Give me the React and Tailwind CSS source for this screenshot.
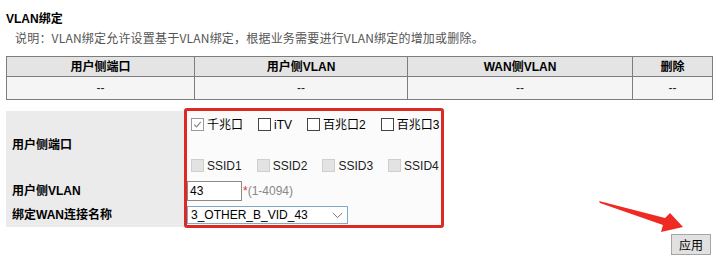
import React from 'react';

const FONT = { fontFamily: '"Liberation Sans", Arial, "Noto Sans CJK SC", sans-serif' };

const PORTS = [
  { label: '千兆口', checked: true },
  { label: 'iTV' },
  { label: '百兆口2' },
  { label: '百兆口3' },
];

const SSIDS = ['SSID1', 'SSID2', 'SSID3', 'SSID4'];

function Box({ checked, disabled }) {
  if (disabled) {
    return <span className="block w-[13px] h-[13px] border border-[#cfcfcf] bg-[#e3e3e3] shrink-0" />;
  }
  return (
    <span className={`flex items-center justify-center w-[13px] h-[13px] border bg-white shrink-0 ${checked ? 'border-[#9a9a9a]' : 'border-[#444]'}`}>
      {checked && (
        <svg width="9" height="9" viewBox="0 0 9 9" fill="none">
          <path d="M1.2 4.6 L3.5 6.9 L7.8 1.8" stroke="#8a8a8a" strokeWidth="1.2" />
        </svg>
      )}
    </span>
  );
}

export default function App() {
  return (
    <div className="relative w-[726px] h-[266px] bg-white overflow-hidden text-[12px] text-[#111]" style={FONT}>
      <div className="pl-[6px] pr-[14px] pt-[11px]">
        {/* Title */}
        <div className="h-[16px] leading-[16px] font-bold text-black">VLAN绑定</div>
        <div className="mt-[3px] h-[16px] leading-[16px] pl-[9px] text-[#555] text-[12px] tracking-[0.2px]" style={{ fontFamily: '"Noto Sans CJK SC", sans-serif' }}>
          说明：VLAN绑定允许设置基于VLAN绑定，根据业务需要进行VLAN绑定的增加或删除。
        </div>

        {/* Binding list */}
        <table className="mt-[10px] w-[706px] border-collapse table-fixed">
          <colgroup>
            <col className="w-[188px]" />
            <col className="w-[213px]" />
            <col className="w-[225px]" />
            <col className="w-[80px]" />
          </colgroup>
          <thead>
            <tr className="h-[20px] bg-[#e4e4e4]">
              {['用户侧端口', '用户侧VLAN', 'WAN侧VLAN', '删除'].map(h => (
                <th key={h} className="border border-[#7d7d7d] font-bold text-center p-0 text-black">{h}</th>
              ))}
            </tr>
          </thead>
          <tbody>
            <tr className="h-[23px] bg-[#f5f5f5]">
              {[0, 1, 2, 3].map(i => (
                <td key={i} className="border border-[#7d7d7d] text-center p-0 text-[#222]">--</td>
              ))}
            </tr>
          </tbody>
        </table>

        {/* Form */}
        <div className="relative mt-[11px] flex">
          <div className="w-[178px] bg-[#ebebeb] flex flex-col font-bold text-black">
            <div className="h-[67px] flex items-center pl-[6px]">用户侧端口</div>
            <div className="h-[25px] flex items-center pl-[6px]">用户侧VLAN</div>
            <div className="h-[24px] flex items-center pl-[6px]">绑定WAN连接名称</div>
          </div>
          <div className="flex flex-col bg-[#fbfbfb] w-[260px]">
            <div className="h-[67px] pl-[7px] pt-[6px] flex flex-col">
              <div className="h-[15px] flex items-center gap-[15px]">
                {PORTS.map(p => (
                  <label key={p.label} className="flex items-center gap-[3px] text-black">
                    <Box checked={p.checked} />
                    <span>{p.label}</span>
                  </label>
                ))}
              </div>
              <div className="mt-[26px] h-[15px] flex items-center gap-[15px]">
                {SSIDS.map(s => (
                  <label key={s} className="flex items-center gap-[3px] text-[#222]">
                    <Box disabled />
                    <span>{s}</span>
                  </label>
                ))}
              </div>
            </div>
            <div className="h-[25px] pl-[3px] flex items-center">
              <div className="w-[55px] h-[20px] border border-[#8a8a8a] bg-white pl-[2px] leading-[18px] text-black">43</div>
              <span className="ml-[1px] text-[#e23030]">*</span>
              <span className="text-[#888]">(1-4094)</span>
            </div>
            <div className="h-[24px] pl-[3px] flex items-center">
              <div className="w-[161px] h-[18px] border border-[#7eaac8] bg-white flex items-center justify-between pl-[3px] pr-[4px] text-black">
                <span>3_OTHER_B_VID_43</span>
                <svg width="11" height="7" viewBox="0 0 11 7" fill="none">
                  <path d="M0.8 1 L5.5 5.6 L10.2 1" stroke="#777" strokeWidth="1" />
                </svg>
              </div>
            </div>
          </div>

          {/* annotation box */}
          <div className="absolute left-[178px] top-[-3px] w-[260px] h-[120px] border-[3px] border-[#dc2a22] rounded-[3px]" />
        </div>

        <div className="flex justify-end mt-[7px] pr-[1px]">
          <button className="w-[40px] h-[21px] bg-[#e1e1e1] border border-[#a5a5a5] text-[12px] text-black leading-none" style={{ fontFamily: '"Noto Sans CJK SC", sans-serif' }}>
            应用
          </button>
        </div>
      </div>

      {/* annotation arrow */}
      <svg className="absolute left-0 top-0 pointer-events-none" width="726" height="266">
        <polygon points="599,201 665,218 670,213 683,227 661,232 663,225 600,203" fill="#ee2a22" />
      </svg>
    </div>
  );
}
